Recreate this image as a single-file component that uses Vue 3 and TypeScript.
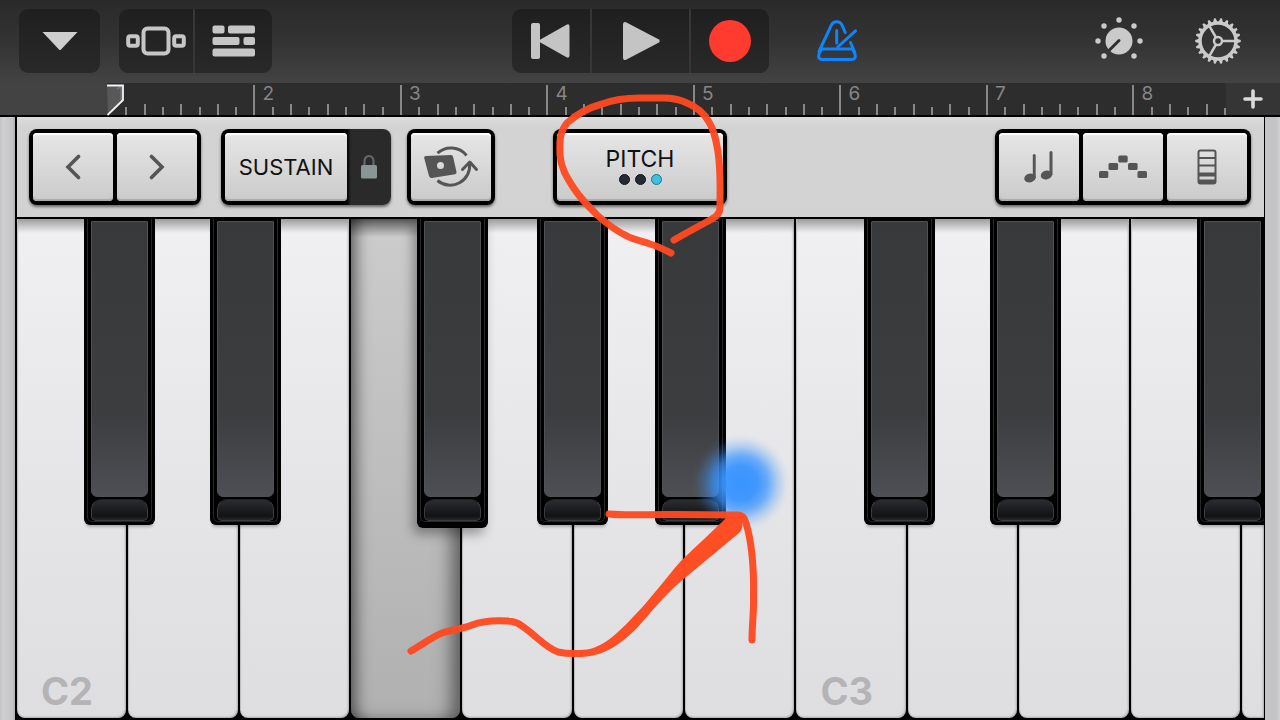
<script setup lang="ts">
interface Bar { label: number; ticks: number }
interface BlackKey { note: string; left: number; low?: boolean }

const bars: Bar[] = [1, 2, 3, 4, 5, 6, 7, 8].map((label) => ({ label, ticks: label === 8 ? 5 : 8 }))

const whiteKeys: { note: string; label?: string; pressed?: boolean }[] = [
  { note: 'C2', label: 'C2' }, { note: 'D2' }, { note: 'E2' }, { note: 'F2', pressed: true },
  { note: 'G2' }, { note: 'A2' }, { note: 'B2' }, { note: 'C3', label: 'C3' },
  { note: 'D3' }, { note: 'E3' }, { note: 'F3' }, { note: 'G3' },
]

// Left edges as thousandths of the keyboard width.
const blackKeys: BlackKey[] = [
  { note: 'C#2', left: 54 }, { note: 'D#2', left: 155 }, { note: 'F#2', left: 321, low: true },
  { note: 'G#2', left: 417 }, { note: 'A#2', left: 512 }, { note: 'C#3', left: 679 },
  { note: 'D#3', left: 780 }, { note: 'F#3', left: 946 },
]

const TEETH = 22
const polar = (r: number, deg: number): string => {
  const a = (deg * Math.PI) / 180
  return `${(24 + r * Math.cos(a)).toFixed(2)} ${(24 + r * Math.sin(a)).toFixed(2)}`
}
const gearTeeth = Array.from({ length: TEETH }, (_, i) => {
  const a = (i * 360) / TEETH
  return `M${polar(19, a - 6.5)}L${polar(22.8, a - 2.2)}L${polar(22.8, a + 2.2)}L${polar(19, a + 6.5)}Z`
}).join('')
</script>

<template>
  <main class="app">
    <header class="topbar">
      <div class="cluster left">
        <div class="group"><button class="dark menu" aria-label="Menu">
          <svg width="38" height="20" viewBox="0 0 38 20"><path d="M1.5 1H36.500L20 18.500Q19 19.500 18 18.500Z" fill="#cfcfd0" /></svg>
        </button></div>
        <div class="group">
          <button class="dark view" aria-label="Browser">
            <svg width="60" height="30" viewBox="0 0 60 30" fill="none" stroke="#c6c6c6" stroke-width="4">
              <rect x="17.500" y="2.500" width="25" height="25" rx="4" />
              <rect x="2.200" y="10.200" width="9.600" height="9.600" rx="2" />
              <rect x="48.200" y="10.200" width="9.600" height="9.600" rx="2" />
            </svg>
          </button>
          <button class="dark tracks" aria-label="Tracks">
            <svg width="43" height="32" viewBox="0 0 43 32" fill="#c6c6c6">
              <rect x="0.500" y="0.500" width="12" height="8" rx="2" /><rect x="16" y="0.500" width="27" height="8" rx="2" />
              <rect x="0.500" y="12" width="27" height="8" rx="2" /><rect x="31.500" y="12" width="11.500" height="8" rx="2" />
              <rect x="0.500" y="23.500" width="42.500" height="8" rx="2" />
            </svg>
          </button>
        </div>
      </div>
      <div class="group">
        <button class="dark back" aria-label="Go to beginning">
          <svg width="40" height="38" viewBox="0 0 40 38" fill="#c4c4c4">
            <rect x="0" y="1" width="9" height="36" rx="2" />
            <path d="M9 17.800L35.500 2.700Q38.500 1.500 38.500 4.500V33.500Q38.500 36.500 35.500 35.300L9 20.200Q7.500 19 9 17.800Z" />
          </svg>
        </button>
        <button class="dark play" aria-label="Play">
          <svg width="42" height="40" viewBox="0 0 42 40" fill="#c4c4c4"><path d="M4 3.500Q4 0 7 1.300L39.500 18.200Q42 20 39.500 21.800L7 38.700Q4 40 4 36.500Z" /></svg>
        </button>
        <button class="dark record" aria-label="Record"><span class="dot" /></button>
      </div>
      <div class="cluster right">
        <button class="plain metro" aria-label="Metronome">
          <svg width="42" height="42" viewBox="0 0 42 42" fill="none" stroke="#0f84ff" stroke-width="3" stroke-linecap="round" stroke-linejoin="round">
            <path d="M3 31.500L15.500 4.800Q17 1.700 20.700 1.700T25.900 4.800L29.200 12.500M34.500 22.500L38.700 32" />
            <path d="M5.500 29H36.500L39 34Q40.500 39.500 35.500 39.500H6.500Q1.500 39.500 3 34Z" />
            <path d="M20.700 10.500V23M21.800 27L39.500 10.800" />
          </svg>
        </button>
        <button class="plain knob" aria-label="Track controls">
          <svg width="48" height="48" viewBox="0 0 48 48" fill="#cacaca">
            <circle cx="24" cy="24" r="13.500" /><path d="M24 23.500L14.500 33" stroke="#303030" stroke-width="3" stroke-linecap="round" />
            <circle cx="24" cy="3" r="2.700" /><circle cx="3" cy="24" r="2.700" /><circle cx="45" cy="24" r="2.700" />
            <circle cx="9" cy="9" r="2.700" /><circle cx="39" cy="9" r="2.700" /><circle cx="9" cy="39" r="2.700" /><circle cx="39" cy="39" r="2.700" />
          </svg>
        </button>
        <button class="plain" aria-label="Settings">
          <svg width="48" height="48" viewBox="0 0 48 48" fill="none" stroke="#cacaca">
            <path :d="gearTeeth" fill="#cacaca" stroke="none" />
            <circle cx="24" cy="24" r="18" stroke-width="3.500" />
            <circle cx="24" cy="24" r="4" stroke-width="2.500" />
            <path d="M28.500 24H42M21.700 20L15 8.400M21.700 28L15 39.600" stroke-width="2.500" />
          </svg>
        </button>
      </div>
    </header>

    <section class="ruler" aria-label="Timeline">
      <div class="track">
        <div v-for="bar in bars" :key="bar.label" class="bar" :style="{ flexGrow: bar.ticks }">
          <span v-for="n in bar.ticks" :key="n" class="tick" :class="{ major: n === 1, beat: n % 2 === 1 }" />
          <span class="num">{{ bar.label }}</span>
        </div>
        <svg class="playhead" width="18" height="32" viewBox="0 0 18 32">
          <path d="M0 1.500H16V16L0.500 31" fill="#6b6b6b" fill-opacity=".7" stroke="#f4f4f4" stroke-width="1.800" />
        </svg>
      </div>
      <button class="plain add" aria-label="Add section">
        <svg width="20" height="20" viewBox="0 0 20 20" stroke="#dadada" stroke-width="3.600" stroke-linecap="round"><path d="M10 2V18M2 10H18" /></svg>
      </button>
    </section>

    <section class="instrument">
      <div class="panel">
        <div class="toolbar">
          <div class="cluster">
            <div class="frame">
              <button class="key-btn" aria-label="Octave down"><svg width="16" height="26" viewBox="0 0 16 26"><path d="M13.500 2.500L3 13L13.500 23.500" fill="none" stroke="#555" stroke-width="3.600" stroke-linecap="round" /></svg></button>
              <button class="key-btn" aria-label="Octave up"><svg width="16" height="26" viewBox="0 0 16 26"><path d="M2.500 2.500L13 13L2.500 23.500" fill="none" stroke="#555" stroke-width="3.600" stroke-linecap="round" /></svg></button>
            </div>
            <div class="frame sustain">
              <button class="key-btn wide">SUSTAIN</button>
              <button class="lock" aria-label="Lock sustain">
                <svg width="18" height="26" viewBox="0 0 18 26"><path d="M4.500 12V7A4.500 5 0 0 1 13.500 7V12" fill="none" stroke="#626b6b" stroke-width="2.200" /><rect x="1" y="11" width="16" height="13.500" rx="1.500" fill="#8b9595" /></svg>
              </button>
            </div>
            <div class="frame">
              <button class="key-btn" aria-label="Rotate keyboard mode">
                <svg width="56" height="44" viewBox="0 0 56 44" fill="none" stroke="#555" stroke-width="3">
                  <path d="M14.500 8.200A20 20 0 0 1 43.500 10.500M14.500 35.500A19.500 19.500 0 0 0 46.500 18" />
                  <path d="M39.500 24.500L46.800 17L53.500 24.500" stroke-linejoin="round" stroke-linecap="round" />
                  <path d="M3 11L28 10Q29.700 10 30 11.500L33.500 27Q33.800 29 32 29.200L9 33Q6.800 33.300 6 31L1.200 13Q0.800 11.200 3 11ZM21 20.500A3.500 3.500 0 1 0 14 20.500A3.500 3.500 0 1 0 21 20.500Z" fill="#555" fill-rule="evenodd" stroke="none" />
                </svg>
              </button>
            </div>
          </div>
          <div class="frame">
            <button class="key-btn pitch">
              <span>PITCH</span>
              <span class="leds"><i /><i /><i class="on" /></span>
            </button>
          </div>
          <div class="cluster end">
            <div class="frame">
              <button class="key-btn" aria-label="Scale">
                <svg width="30" height="34" viewBox="0 0 30 34" fill="#555">
                  <ellipse cx="6" cy="28" rx="5.800" ry="4.300" transform="rotate(-14 6 28)" /><path d="M8.800 5.500Q8.800 4 10.200 4T11.700 5.500V28H8.800Z" />
                  <ellipse cx="22.500" cy="25" rx="5.800" ry="4.300" transform="rotate(-14 22.500 25)" /><path d="M25.500 2.500Q25.500 1 27 1T28.500 2.500V25H25.500Z" />
                </svg>
              </button>
              <button class="key-btn" aria-label="Arpeggiator">
                <svg width="48" height="24" viewBox="0 0 48 24" fill="#555">
                  <rect x="0" y="16" width="9.300" height="7" rx="1.500" /><rect x="9.500" y="8" width="9.600" height="7" rx="1.500" />
                  <rect x="19.300" y="0.500" width="9.400" height="7" rx="1.500" /><rect x="29" y="8" width="9.600" height="7" rx="1.500" /><rect x="38.500" y="16" width="9.500" height="7" rx="1.500" />
                </svg>
              </button>
              <button class="key-btn" aria-label="Keyboard layout">
                <svg width="20" height="36" viewBox="0 0 20 36" fill="none" stroke="#555" stroke-width="2">
                  <rect x="1.500" y="1.500" width="17" height="33" rx="2" /><path d="M2 9H18M2 16.500H18" /><path d="M2 25.500H18" stroke-width="4" /><path d="M2 32.500H18" stroke-width="4" />
                </svg>
              </button>
            </div>
          </div>
        </div>

        <div class="keyboard">
          <button v-for="k in whiteKeys" :key="k.note" class="white" :class="{ pressed: k.pressed }" :aria-label="k.note">{{ k.label }}</button>
          <button v-for="k in blackKeys" :key="k.note" class="black" :class="{ low: k.low }" :style="{ left: k.left / 10 + '%' }" :aria-label="k.note">
            <span class="cap"><span class="top" /><span class="lip" /></span>
          </button>
        </div>
      </div>
    </section>

    <svg class="marks" viewBox="0 0 1280 720" preserveAspectRatio="none" fill="none" aria-hidden="true">
      <defs>
        <radialGradient id="touch">
          <stop offset="0" stop-color="#3994ff" /><stop offset=".35" stop-color="#3994ff" stop-opacity=".95" />
          <stop offset=".55" stop-color="#3994ff" stop-opacity=".72" /><stop offset=".75" stop-color="#3994ff" stop-opacity=".3" />
          <stop offset=".9" stop-color="#3994ff" stop-opacity=".07" /><stop offset="1" stop-color="#3994ff" stop-opacity="0" />
        </radialGradient>
      </defs>
      <circle cx="741" cy="483" r="49" fill="url(#touch)" />
      <g stroke="#ff4a20" stroke-opacity=".96" stroke-linecap="round" stroke-linejoin="round">
        <path stroke-width="7" d="M671 253C665 250 657 246 650 244C642 241 634 240 627 236C616 231 606 223 597 215C588 206 580 198 573 187C566 176 561 168 560 155C560 145 558 134 567 123C577 114 591 107 602 104C615 99 626 98 640 98H663C675 98 681 100 687 103C697 107 704 113 709 122C715 132 716 141 718 152C721 172 720 190 720 207Q720 215 712 219C699 226 686 233 674 240" />
        <path stroke-width="7" d="M609 514C630 516 650 514 675 514.500L738 515Q744 515 746 523C752 543 754 570 753.500 597C754 611 752 625 752 640" />
        <path stroke-width="7" d="M411 651C420 646 432 637 442 633C452 630 462 629 472 625C482 621 492 620 508 621C517 621 522 626 530 632C540 640 547 648 558 652Q567 654 580 653.500" />
      </g>
      <path fill="#ff4a20" fill-opacity=".98" d="M580 650C600 650 614 637 633 617C650 600 665 579 680 562C696 546 712 532 727 517L741 517Q745 527 739 533L680 582C665 595 651 612 637 628C622 643 604 657 580 657Z" />
    </svg>
  </main>
</template>

<style>
body { background: #000; }
</style>

<style scoped>
* { box-sizing: border-box; }
.app { position: relative; display: flex; flex-direction: column; min-height: 100vh; overflow: hidden; font-family: Inter, "Liberation Sans", sans-serif; background: #000; }
button { border: 0; padding: 0; margin: 0; font: inherit; color: inherit; background: none; display: flex; align-items: center; justify-content: center; cursor: pointer; }
svg { display: block; flex: none; }
.cluster { display: flex; align-items: center; }

.topbar { display: grid; grid-template-columns: 1fr auto 1fr; align-items: start; height: 83px; padding: 9px 38px 0 19px; background: linear-gradient(#2a2a2a, #333 50%, #434343); }
.left { gap: 19px; }
.group { display: flex; gap: 2px; height: 64px; border-radius: 9px; overflow: hidden; background: #373737; }
.dark { background: linear-gradient(#1f1f1f, #292929); }
.menu { width: 81px; }
.view { width: 74px; }
.tracks { width: 77px; }
.back { width: 78px; }
.play { width: 97px; }
.record { width: 78px; }
.dot { width: 42px; height: 42px; border-radius: 50%; background: #ff3b30; }
.topbar > .group { margin-left: 19px; }
.right { height: 64px; padding-left: 47px; }
.knob { margin: 0 51px 0 auto; }

.ruler { display: flex; height: 34px; padding-left: 107px; background: #434343; border-bottom: 2px solid #000; }
.track { position: relative; flex: 1; display: flex; border-top: 1px solid #252525; border-right: 2px solid #777; border-image: linear-gradient(#2d2d2d 75%, #888 75%) 1; background: #2d2d2d; }
.bar { position: relative; flex: 1 1 0; display: flex; align-items: flex-end; }
.tick { flex: 1; height: 8px; border-left: 2px solid #888; }
.beat { height: 11px; }
.major { height: 30px; }
.bar:first-child .major { border-color: transparent; }
.num { position: absolute; left: 9px; top: 0; font-size: 19px; line-height: 20px; color: #868686; }
.playhead { position: absolute; left: 0; top: 0; }
.add { width: 54px; background: #353535; }

.instrument { flex: 1; display: flex; padding: 0 15px; background: linear-gradient(90deg, #c4c3c5, #d0cfd1 3px, #c4c3c5 13px, #aaa 15px, #c4c3c5 calc(100% - 14px), #c4c3c5 calc(100% - 4px), #d2d1d3); }
.panel { flex: 1; min-width: 0; display: flex; flex-direction: column; border: solid #000; border-width: 0 1px 0 2px; background: #000; }
.toolbar { display: grid; grid-template-columns: 1fr auto 1fr; align-items: center; height: 102px; padding: 0 13px 0 12px; border-bottom: 2px solid #000; background: linear-gradient(#dcdcdc, #d3d3d3 10%, #d2d2d2); color: #111; }
.end { justify-content: flex-end; }
.frame { display: flex; gap: 4px; height: 76px; padding: 4px; border-radius: 8px; background: #000; box-shadow: 0 2px 3px rgba(0, 0, 0, .5); }
.key-btn { width: 80px; border-radius: 4px; background: linear-gradient(#e6e6e6, #cbcbcb); box-shadow: inset 0 2px 1px #fff, inset 0 -2px 1px #aaa; font-size: 23px; }
.sustain { width: 170px; margin: 0 16px 0 20px; padding-right: 0; gap: 0; background: linear-gradient(90deg, #000 126px, #2a2a2a 130px); }
.wide { width: 122px; font-size: 22px; }
.lock { flex: 1; }
.pitch { width: 166px; flex-direction: column; gap: 3px; padding-bottom: 2px; line-height: 24px; font-size: 23px; }
.leds { display: flex; gap: 5px; }
.leds i { width: 11px; height: 11px; border-radius: 50%; background: #252b33; border: 1px solid #11151b; }
.leds .on { background: #3fc0df; border-color: #23728c; }

.keyboard { position: relative; flex: 1; min-height: 501px; display: grid; grid-template-columns: repeat(11, 109fr) 22fr; gap: 2px; padding-bottom: 2px; overflow: hidden; background: #000; }
.white { align-items: flex-end; justify-content: flex-start; padding: 0 0 4px 24px; min-width: 0; overflow: hidden; border-radius: 0 0 8px 8px; font-size: 38px; font-weight: 700; line-height: 46px; color: #b4b4b6; background: linear-gradient(rgba(0, 0, 0, .35), transparent 14px), linear-gradient(#f0f0f2, #e6e6e8 50%, #dedee0); box-shadow: inset 1px 0 1px #bbb, inset -1px -1px 2px #aaa; }
.white:nth-child(12) { border-radius: 0 0 0 8px; padding: 0; }
.pressed { background: linear-gradient(rgba(0, 0, 0, .5), transparent 18px), linear-gradient(#ccc, #b0b0b1); box-shadow: inset 14px 0 16px -10px rgba(0, 0, 0, .6), inset -14px 0 18px -6px rgba(0, 0, 0, .5); }
.black { position: absolute; top: 0; width: 71px; height: 61%; padding: 0 3px 3px; align-items: stretch; border-radius: 0 0 6px 6px; background: #000; box-shadow: 0 4px 3px -2px rgba(0, 0, 0, .25); }
.low { height: calc(61% + 3px); padding-bottom: 6px; box-shadow: -4px 6px 12px rgba(0, 0, 0, .35); }
.cap { flex: 1; display: flex; flex-direction: column; gap: 2px; padding: 2px 3px 0; border: solid #27272a; border-width: 0 1px 1px; border-radius: 0 0 5px 5px; }
.top { flex: 1; border: 1px solid #505154; border-radius: 1px 1px 6px 6px; background: linear-gradient(#38393b, #3c3d3f 70%, #4e4f55); }
.lip { height: 22px; border: 1px solid #3c3d40; border-top-color: #222; border-radius: 10px 10px 5px 5px; background: linear-gradient(#2c2d31, #111214 80%, #25262a); }
.marks { position: absolute; inset: 0; width: 100%; height: 100%; pointer-events: none; }
</style>
